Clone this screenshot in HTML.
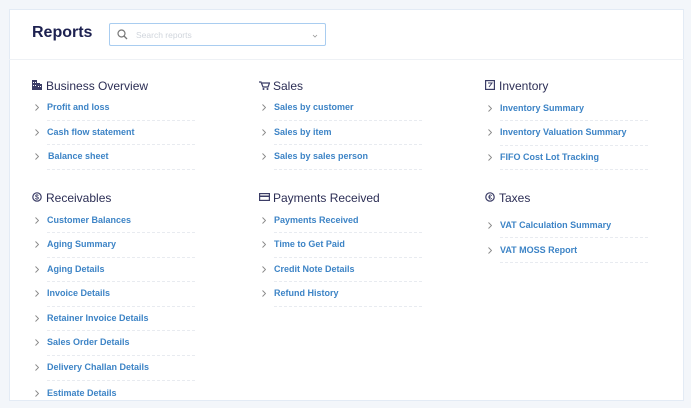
<!DOCTYPE html>
<html><head><meta charset="utf-8"><style>
*{margin:0;padding:0;box-sizing:border-box}
body{width:691px;height:408px;background:#f3f6fa;font-family:"Liberation Sans",sans-serif;position:relative;overflow:hidden}
.card{position:absolute;left:9px;top:9px;width:675px;height:392px;background:#fff;border:1px solid #e3ebf5}
.hsep{position:absolute;left:9px;top:59px;width:675px;height:1px;background:#eef1f5}
.title{position:absolute;left:32px;top:24px;font-size:16px;font-weight:bold;color:#1d2150}
.search{position:absolute;left:109px;top:23px;width:217px;height:23px;border:1px solid #a9cdf0;border-radius:2px}
.search span{position:absolute;left:26px;top:6px;font-size:8.5px;color:#d0d5dc}
.h{position:absolute;font-size:12px;color:#2c2e55}
.ic{position:absolute}
.it{position:absolute;font-size:9px;font-weight:bold;color:#3d84c6}
.ch{position:absolute;width:4px;height:7px}
.d{position:absolute;width:148px;border-top:1px dashed #e8ebf0;height:0}
</style></head><body>
<div class="card"></div>
<div class="hsep"></div>
<div class="title">Reports</div>
<div class="search">
<svg style="position:absolute;left:7px;top:5px" width="11" height="11" viewBox="0 0 11 11"><circle cx="4.5" cy="4.5" r="3.5" fill="none" stroke="#777" stroke-width="1.2"/><path d="M7 7l3 3" stroke="#777" stroke-width="1.3"/></svg>
<span>Search reports</span>
<svg style="position:absolute;left:202px;top:10px" width="6" height="4" viewBox="0 0 6 4"><path d="M1 1l2 2 2-2" fill="none" stroke="#999" stroke-width="0.8"/></svg>
</div>

<svg width="0" height="0" style="position:absolute"><defs><symbol id="cv" viewBox="0 0 4 7"><path d="M0.5 0.5L3.5 3.5L0.5 6.5" fill="none" stroke="#888" stroke-width="0.9"/></symbol></defs></svg>

<!-- headers -->
<svg class="ic" style="left:32px;top:80px" width="10" height="10" viewBox="0 0 10 10"><path d="M0 10V0h5v3h3v1h2v6z" fill="#3b3d66"/><path d="M1 2h1v1H1zM3 2h1v1H3zM1 5h1v1H1zM3 5h1v1H3zM6 6h1v1H6zM8 6h1v1H8z" fill="#fff"/></svg>
<div class="h" style="left:46px;top:79px">Business Overview</div>
<svg class="ic" style="left:259px;top:81px" width="11" height="9" viewBox="0 0 11 9"><path d="M0 1h2l2 5h5l1.5-4H3" fill="none" stroke="#3b3d66" stroke-width="1.2"/><circle cx="4.5" cy="8" r="1" fill="#3b3d66"/><circle cx="8.5" cy="8" r="1" fill="#3b3d66"/></svg>
<div class="h" style="left:273px;top:79px">Sales</div>
<svg class="ic" style="left:485px;top:80px" width="10" height="10" viewBox="0 0 10 10"><rect x="0.6" y="0.6" width="8.8" height="8.8" fill="none" stroke="#3b3d66" stroke-width="1.2"/><path d="M3 3h4l-3 4" fill="none" stroke="#3b3d66" stroke-width="1"/></svg>
<div class="h" style="left:499px;top:79px">Inventory</div>

<svg class="ic" style="left:32px;top:192px" width="10" height="10" viewBox="0 0 10 10"><circle cx="5" cy="5" r="4.2" fill="none" stroke="#3b3d66" stroke-width="1.2"/><text x="5" y="7.5" font-size="7" text-anchor="middle" fill="#3b3d66" font-family="Liberation Sans" font-weight="bold">$</text></svg>
<div class="h" style="left:46px;top:191px">Receivables</div>
<svg class="ic" style="left:259px;top:193px" width="11" height="8" viewBox="0 0 11 8"><rect x="0.6" y="0.6" width="9.8" height="6.8" fill="none" stroke="#3b3d66" stroke-width="1.2"/><rect x="0" y="2.5" width="11" height="1.5" fill="#3b3d66"/></svg>
<div class="h" style="left:273px;top:191px">Payments Received</div>
<svg class="ic" style="left:485px;top:192px" width="10" height="10" viewBox="0 0 10 10"><circle cx="5" cy="5" r="4.2" fill="none" stroke="#3b3d66" stroke-width="1.2"/><text x="5.2" y="7.5" font-size="7" text-anchor="middle" fill="#3b3d66" font-family="Liberation Sans" font-weight="bold">€</text></svg>
<div class="h" style="left:499px;top:191px">Taxes</div>

<!-- col1 -->
<svg class="ch" style="left:35px;top:104px"><use href="#cv"/></svg><div class="it" style="left:47px;top:102px">Profit and loss</div><div class="d" style="left:47px;top:120px"></div>
<svg class="ch" style="left:35px;top:129px"><use href="#cv"/></svg><div class="it" style="left:47px;top:127px">Cash flow statement</div><div class="d" style="left:47px;top:144px"></div>
<svg class="ch" style="left:35px;top:153px"><use href="#cv"/></svg><div class="it" style="left:48px;top:151px">Balance sheet</div><div class="d" style="left:47px;top:169px"></div>

<svg class="ch" style="left:35px;top:217px"><use href="#cv"/></svg><div class="it" style="left:47px;top:215px">Customer Balances</div><div class="d" style="left:47px;top:232px"></div>
<svg class="ch" style="left:35px;top:241px"><use href="#cv"/></svg><div class="it" style="left:47px;top:239px">Aging Summary</div><div class="d" style="left:47px;top:257px"></div>
<svg class="ch" style="left:35px;top:266px"><use href="#cv"/></svg><div class="it" style="left:47px;top:264px">Aging Details</div><div class="d" style="left:47px;top:281px"></div>
<svg class="ch" style="left:35px;top:290px"><use href="#cv"/></svg><div class="it" style="left:47px;top:288px">Invoice Details</div><div class="d" style="left:47px;top:306px"></div>
<svg class="ch" style="left:35px;top:315px"><use href="#cv"/></svg><div class="it" style="left:47px;top:313px">Retainer Invoice Details</div><div class="d" style="left:47px;top:330px"></div>
<svg class="ch" style="left:35px;top:339px"><use href="#cv"/></svg><div class="it" style="left:47px;top:337px">Sales Order Details</div><div class="d" style="left:47px;top:355px"></div>
<svg class="ch" style="left:35px;top:364px"><use href="#cv"/></svg><div class="it" style="left:47px;top:362px">Delivery Challan Details</div><div class="d" style="left:47px;top:380px"></div>
<svg class="ch" style="left:35px;top:390px"><use href="#cv"/></svg><div class="it" style="left:47px;top:388px">Estimate Details</div>

<!-- col2 -->
<svg class="ch" style="left:262px;top:104px"><use href="#cv"/></svg><div class="it" style="left:274px;top:102px">Sales by customer</div><div class="d" style="left:274px;top:120px"></div>
<svg class="ch" style="left:262px;top:129px"><use href="#cv"/></svg><div class="it" style="left:274px;top:127px">Sales by item</div><div class="d" style="left:274px;top:144px"></div>
<svg class="ch" style="left:262px;top:153px"><use href="#cv"/></svg><div class="it" style="left:274px;top:151px">Sales by sales person</div><div class="d" style="left:274px;top:169px"></div>

<svg class="ch" style="left:262px;top:217px"><use href="#cv"/></svg><div class="it" style="left:274px;top:215px">Payments Received</div><div class="d" style="left:274px;top:232px"></div>
<svg class="ch" style="left:262px;top:241px"><use href="#cv"/></svg><div class="it" style="left:274px;top:239px">Time to Get Paid</div><div class="d" style="left:274px;top:257px"></div>
<svg class="ch" style="left:262px;top:266px"><use href="#cv"/></svg><div class="it" style="left:274px;top:264px">Credit Note Details</div><div class="d" style="left:274px;top:281px"></div>
<svg class="ch" style="left:262px;top:290px"><use href="#cv"/></svg><div class="it" style="left:274px;top:288px">Refund History</div><div class="d" style="left:274px;top:306px"></div>

<!-- col3 -->
<svg class="ch" style="left:488px;top:105px"><use href="#cv"/></svg><div class="it" style="left:500px;top:103px">Inventory Summary</div><div class="d" style="left:500px;top:120px"></div>
<svg class="ch" style="left:488px;top:129px"><use href="#cv"/></svg><div class="it" style="left:500px;top:127px">Inventory Valuation Summary</div><div class="d" style="left:500px;top:145px"></div>
<svg class="ch" style="left:488px;top:154px"><use href="#cv"/></svg><div class="it" style="left:500px;top:152px">FIFO Cost Lot Tracking</div><div class="d" style="left:500px;top:169px"></div>

<svg class="ch" style="left:488px;top:222px"><use href="#cv"/></svg><div class="it" style="left:500px;top:220px">VAT Calculation Summary</div><div class="d" style="left:500px;top:237px"></div>
<svg class="ch" style="left:488px;top:247px"><use href="#cv"/></svg><div class="it" style="left:500px;top:245px">VAT MOSS Report</div><div class="d" style="left:500px;top:262px"></div>
</body></html>
